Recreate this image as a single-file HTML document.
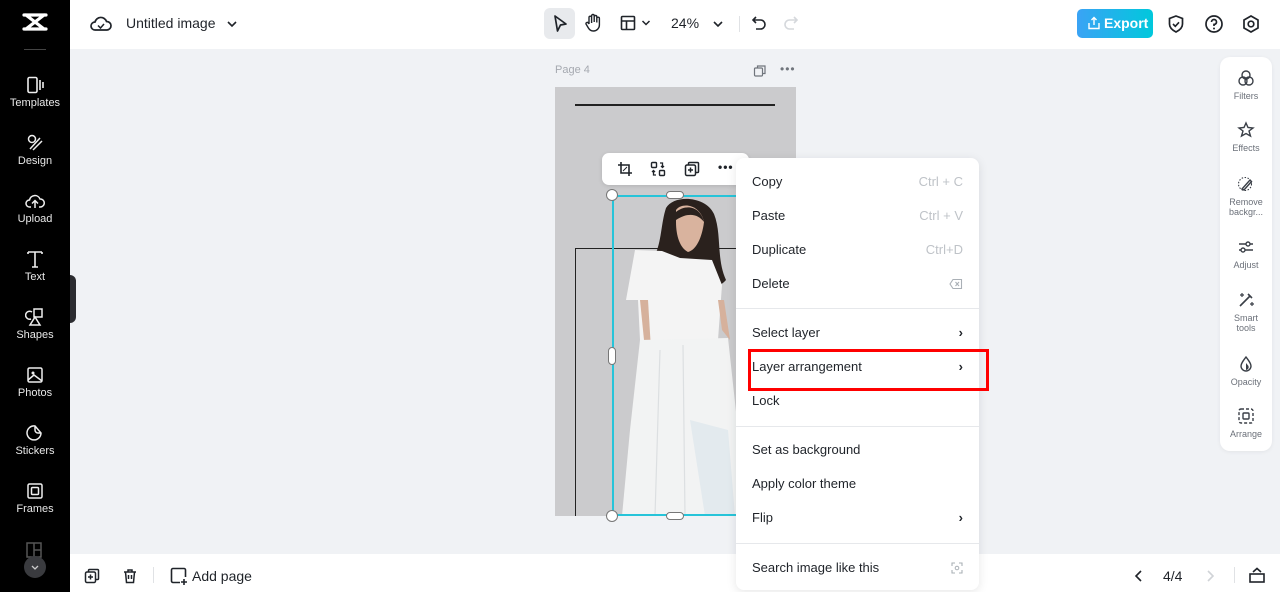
<!DOCTYPE html>
<html><head><meta charset="utf-8">
<style>
*{box-sizing:border-box;margin:0;padding:0}
body{width:1280px;height:592px;overflow:hidden;position:relative;background:#f0f2f5;font-family:"Liberation Sans",sans-serif;color:#1f2329}
.abs{position:absolute}
#side{left:0;top:0;width:70px;height:592px;background:#000}
.si{position:absolute;left:0;width:70px;text-align:center;color:#e8e8e8;font-size:11px}
.si svg{display:block;margin:0 auto 3px}
#top{left:70px;top:0;width:1210px;height:49px;background:#fff}
#bot{left:70px;top:554px;width:1210px;height:38px;background:#fff}
.mi{position:absolute;left:16px;right:16px;font-size:13px;color:#1f2329;height:20px;line-height:20px}
.mi .k{position:absolute;right:0;top:0;color:#bfc3c8;font-size:13px}
.sep{position:absolute;left:0;right:0;height:1px;background:#e6e8eb}
.ri{position:absolute;left:0;width:52px;text-align:center;font-size:9px;color:#6b7079;line-height:10px}
.ri svg{display:block;margin:0 auto 4px}
</style></head><body>

<div id="side" class="abs">
  <svg class="abs" style="left:22px;top:12px" width="26" height="20" viewBox="0 0 26 20"><path d="M2 3 L24 3 M2 17 L24 17 M4 3 L22 17 M22 3 L4 17" stroke="#fff" stroke-width="3.2" fill="none" stroke-linecap="round"/></svg>
  <div class="abs" style="left:24px;top:49px;width:22px;height:1px;background:#444"></div>
  <div class="si" style="top:76px"><svg width="20" height="18" viewBox="0 0 20 18"><rect x="3" y="1.5" width="9" height="15" rx="1.5" stroke="#eee" stroke-width="1.6" fill="none"/><path d="M15 4v10M18 6v6" stroke="#eee" stroke-width="1.6"/></svg>Templates</div>
  <div class="si" style="top:134px"><svg width="20" height="18" viewBox="0 0 20 18"><circle cx="7" cy="5" r="3.5" stroke="#eee" stroke-width="1.5" fill="none"/><path d="M5 15 L15 4 M8 16 L17 7" stroke="#eee" stroke-width="1.5"/></svg>Design</div>
  <div class="si" style="top:192px"><svg width="20" height="18" viewBox="0 0 20 18"><path d="M6 15 H4.5 A3.5 3.5 0 0 1 4.5 8 A5.5 5.5 0 0 1 15 7 A3.5 3.5 0 0 1 15.5 15 H14 M10 16 V9 M7 11.5 L10 8.5 L13 11.5" stroke="#eee" stroke-width="1.5" fill="none"/></svg>Upload</div>
  <div class="si" style="top:250px"><svg width="20" height="18" viewBox="0 0 20 18"><path d="M3 2 H17 M10 2 V17 M3 2 V4 M17 2 V4 M7 17 H13" stroke="#eee" stroke-width="1.6" fill="none"/></svg>Text</div>
  <div class="si" style="top:308px"><svg width="20" height="18" viewBox="0 0 20 18"><path d="M7 4 A4 4 0 1 0 6 11" stroke="#eee" stroke-width="1.5" fill="none"/><rect x="9" y="1" width="8" height="8" stroke="#eee" stroke-width="1.5" fill="none"/><path d="M10 9 L15 17 H5 Z" stroke="#eee" stroke-width="1.5" fill="none"/></svg>Shapes</div>
  <div class="si" style="top:366px"><svg width="20" height="18" viewBox="0 0 20 18"><rect x="3" y="2" width="14" height="14" rx="1.5" stroke="#eee" stroke-width="1.5" fill="none"/><circle cx="8" cy="7" r="1.5" fill="#eee"/><path d="M3 14 L9 9 L17 15" stroke="#eee" stroke-width="1.5" fill="none"/></svg>Photos</div>
  <div class="si" style="top:424px"><svg width="20" height="18" viewBox="0 0 20 18"><path d="M16 9 A7 7 0 1 1 10 2 L16 9 Z M10 2 V6 A3 3 0 0 0 13 9 H16" stroke="#eee" stroke-width="1.5" fill="none"/></svg>Stickers</div>
  <div class="si" style="top:482px"><svg width="20" height="18" viewBox="0 0 20 18"><rect x="3" y="2" width="14" height="14" rx="1.5" stroke="#eee" stroke-width="1.5" fill="none"/><rect x="6.5" y="5.5" width="7" height="7" rx="1" stroke="#eee" stroke-width="1.5" fill="none"/></svg>Frames</div>
  <svg class="abs" style="left:26px;top:542px" width="16" height="16" viewBox="0 0 16 16"><rect x="1" y="1" width="14" height="14" stroke="#555" stroke-width="1.5" fill="none"/><path d="M8 1V15M8 8H15" stroke="#555" stroke-width="1.5"/></svg>
  <div class="abs" style="left:24px;top:556px;width:22px;height:22px;border-radius:50%;background:#3a3b3f"></div>
  <svg class="abs" style="left:30px;top:562px" width="10" height="10" viewBox="0 0 10 10"><path d="M2 4 L5 7 L8 4" stroke="#ccc" stroke-width="1.3" fill="none"/></svg>
</div>
<div class="abs" style="left:70px;top:275px;width:6px;height:48px;background:#2b2c30;border-radius:0 6px 6px 0"></div>

<div id="top" class="abs">
  <svg class="abs" style="left:20px;top:14px" width="22" height="20" viewBox="0 0 22 20"><path d="M6 16 H5 A4 4 0 0 1 5 8 A6 6 0 0 1 16.5 7.5 A4.2 4.2 0 0 1 17 16 Z" stroke="#1f2329" stroke-width="1.7" fill="none"/><path d="M8 11.5 L10.5 14 L14 10" stroke="#1f2329" stroke-width="1.5" fill="none"/></svg>
  <div class="abs" style="left:56px;top:15px;font-size:14px;color:#1f2329">Untitled image</div>
  <svg class="abs" style="left:156px;top:18px" width="12" height="12" viewBox="0 0 12 12"><path d="M2 4 L6 8 L10 4" stroke="#1f2329" stroke-width="1.6" fill="none"/></svg>

  <div class="abs" style="left:474px;top:8px;width:31px;height:31px;background:#e8eaed;border-radius:6px"></div>
  <svg class="abs" style="left:481px;top:14px" width="18" height="20" viewBox="0 0 18 20"><path d="M4 2 L15 10 L9.5 11 L6.5 17 Z" stroke="#1f2329" stroke-width="1.7" fill="none" stroke-linejoin="round"/></svg>
  <svg class="abs" style="left:514px;top:13px" width="18" height="20" viewBox="0 0 18 20"><path d="M5 11 V4.5 a1.3 1.3 0 0 1 2.6 0 V10 M7.6 9 V2.8 a1.3 1.3 0 0 1 2.6 0 V9 M10.2 9 V3.8 a1.3 1.3 0 0 1 2.6 0 V9.5 M12.8 9.5 V5.5 a1.3 1.3 0 0 1 2.6 0 V12 a6 6 0 0 1 -6 6 a6 6 0 0 1 -5 -3 L2 11 a1.3 1.3 0 0 1 2.2 -1.2 L5 11" stroke="#1f2329" stroke-width="1.4" fill="none"/></svg>
  <svg class="abs" style="left:550px;top:15px" width="16" height="16" viewBox="0 0 16 16"><rect x="1.5" y="1.5" width="13" height="13" rx="1" stroke="#1f2329" stroke-width="1.6" fill="none"/><path d="M1.5 6 H14.5 M6.5 6 V14.5" stroke="#1f2329" stroke-width="1.6"/></svg>
  <svg class="abs" style="left:571px;top:18px" width="10" height="10" viewBox="0 0 10 10"><path d="M1.5 3 L5 6.5 L8.5 3" stroke="#1f2329" stroke-width="1.5" fill="none"/></svg>
  <div class="abs" style="left:601px;top:15px;font-size:14px;color:#1f2329">24%</div>
  <svg class="abs" style="left:642px;top:18px" width="12" height="12" viewBox="0 0 12 12"><path d="M2 4 L6 8 L10 4" stroke="#1f2329" stroke-width="1.6" fill="none"/></svg>
  <div class="abs" style="left:669px;top:16px;width:1px;height:16px;background:#e0e2e5"></div>
  <svg class="abs" style="left:681px;top:15px" width="16" height="16" viewBox="0 0 16 16"><path d="M5 2 L2 5 L5 8 M2 5 H9.5 A4.5 4.5 0 0 1 9.5 14 H5" stroke="#1f2329" stroke-width="1.6" fill="none"/></svg>
  <svg class="abs" style="left:713px;top:15px" width="16" height="16" viewBox="0 0 16 16"><path d="M11 2 L14 5 L11 8 M14 5 H6.5 A4.5 4.5 0 0 0 6.5 14 H11" stroke="#d5d8dc" stroke-width="1.6" fill="none"/></svg>

  <div class="abs" style="left:1007px;top:9px;width:76px;height:29px;border-radius:5px;background:linear-gradient(90deg,#3aa3f5,#00c8dc)"></div>
  <svg class="abs" style="left:1017px;top:16px" width="14" height="14" viewBox="0 0 14 14"><path d="M7 9 V1.5 M4.5 4 L7 1.5 L9.5 4 M2 7 V12.5 H12 V7" stroke="#fff" stroke-width="1.4" fill="none"/></svg>
  <div class="abs" style="left:1034px;top:15px;font-size:14px;font-weight:bold;color:#fff">Export</div>
  <svg class="abs" style="left:1096px;top:14px" width="20" height="20" viewBox="0 0 20 20"><path d="M10 2 L16.5 4.5 V10 C16.5 14 13 16.5 10 18 C7 16.5 3.5 14 3.5 10 V4.5 Z" stroke="#1f2329" stroke-width="1.7" fill="none"/><path d="M7 10 L9.3 12.3 L13 8.3" stroke="#1f2329" stroke-width="1.6" fill="none"/></svg>
  <svg class="abs" style="left:1134px;top:14px" width="20" height="20" viewBox="0 0 20 20"><circle cx="10" cy="10" r="8" stroke="#1f2329" stroke-width="1.7" fill="none"/><path d="M7.5 8 A2.5 2.5 0 1 1 10 10.5 V12" stroke="#1f2329" stroke-width="1.7" fill="none"/><circle cx="10" cy="14.5" r="1" fill="#1f2329"/></svg>
  <svg class="abs" style="left:1171px;top:14px" width="20" height="20" viewBox="0 0 20 20"><path d="M10 2 L17 6 V14 L10 18 L3 14 V6 Z" stroke="#1f2329" stroke-width="1.7" fill="none"/><circle cx="10" cy="10" r="2.8" stroke="#1f2329" stroke-width="1.7" fill="none"/></svg>
</div>

<!-- right panel -->
<div class="abs" style="left:1220px;top:57px;width:52px;height:394px;background:#fff;border-radius:10px;box-shadow:0 1px 4px rgba(0,0,0,.06)">
  <div class="ri" style="top:12px"><svg width="18" height="18" viewBox="0 0 18 18"><circle cx="9" cy="6" r="4" stroke="#3a3f47" stroke-width="1.4" fill="none"/><circle cx="6" cy="12" r="4" stroke="#3a3f47" stroke-width="1.4" fill="none"/><circle cx="12" cy="12" r="4" stroke="#3a3f47" stroke-width="1.4" fill="none"/></svg>Filters</div>
  <div class="ri" style="top:64px"><svg width="18" height="18" viewBox="0 0 18 18"><path d="M9 2 L11 6.5 L16 7 L12 10 L13.5 15 L9 12.5 L4.5 15 L6 10 L2 7 L7 6.5 Z" stroke="#3a3f47" stroke-width="1.4" fill="none"/></svg>Effects</div>
  <div class="ri" style="top:118px"><svg width="18" height="18" viewBox="0 0 18 18"><circle cx="8" cy="9" r="6.5" stroke="#3a3f47" stroke-width="1.1" stroke-dasharray="1.5 1.5" fill="none"/><path d="M5 14 L13 5 L14.5 6.5 L7 15 Z" stroke="#3a3f47" stroke-width="1.4" fill="none"/></svg>Remove<br>backgr...</div>
  <div class="ri" style="top:181px"><svg width="18" height="18" viewBox="0 0 18 18"><path d="M2 6 H16 M2 12 H16" stroke="#3a3f47" stroke-width="1.4"/><circle cx="11" cy="6" r="2" fill="#fff" stroke="#3a3f47" stroke-width="1.4"/><circle cx="6" cy="12" r="2" fill="#fff" stroke="#3a3f47" stroke-width="1.4"/></svg>Adjust</div>
  <div class="ri" style="top:234px"><svg width="18" height="18" viewBox="0 0 18 18"><path d="M3 15 L13 5 M11 3 L15 7" stroke="#3a3f47" stroke-width="1.6"/><path d="M5 2 V6 M3 4 H7 M15 11 V15 M13 13 H17" stroke="#3a3f47" stroke-width="1.2"/></svg>Smart<br>tools</div>
  <div class="ri" style="top:298px"><svg width="18" height="18" viewBox="0 0 18 18"><path d="M9 2 C12 6 14 8.5 14 11 A5 5 0 0 1 4 11 C4 8.5 6 6 9 2 Z" stroke="#3a3f47" stroke-width="1.4" fill="none"/><path d="M9 8 V15 A3 3 0 0 0 11.5 11 Z" fill="#3a3f47"/></svg>Opacity</div>
  <div class="ri" style="top:350px"><svg width="18" height="18" viewBox="0 0 18 18"><rect x="2" y="2" width="14" height="14" rx="2" stroke="#3a3f47" stroke-width="1.4" stroke-dasharray="3 2" fill="none"/><rect x="6" y="6" width="6" height="6" rx="1" stroke="#3a3f47" stroke-width="1.4" fill="none"/></svg>Arrange</div>
</div>

<!-- page header -->
<div class="abs" style="left:555px;top:64px;font-size:11px;color:#a5a9b0">Page 4</div>
<svg class="abs" style="left:753px;top:64px" width="14" height="14" viewBox="0 0 14 14"><rect x="1.5" y="4" width="8" height="8" rx="1" stroke="#70757c" stroke-width="1.2" fill="none"/><path d="M4.5 4 V2 H12 V9.5 H9.5" stroke="#70757c" stroke-width="1.2" fill="none"/></svg>
<div class="abs" style="left:780px;top:62px;font-size:12px;color:#70757c;letter-spacing:1px">•••</div>

<!-- canvas -->
<div class="abs" style="left:555px;top:87px;width:241px;height:429px;background:#cbcbcd;overflow:hidden">
  <div class="abs" style="left:20px;top:17px;width:200px;height:1.5px;background:#222"></div>
  <div class="abs" style="left:20px;top:161px;width:200px;height:300px;border:1.5px solid #222"></div>
  <svg class="abs" style="left:0;top:0" width="241" height="429" viewBox="555 87 241 429">
    <path d="M666 208 C674 194 706 196 714 214 C722 234 716 258 726 280 C716 292 700 286 694 272 L682 262 C670 272 654 272 650 262 C662 250 660 226 666 208 Z" fill="#2a211d"/>
    <path d="M676 210 C682 202 700 204 704 222 C702 238 696 250 688 252 C680 248 676 236 676 222 Z" fill="#d9b39e"/>
    <path d="M676 212 C686 204 700 206 704 222 C698 214 688 212 676 220 Z" fill="#2a211d"/>
    <path d="M635 250 L662 251 L680 258 L712 260 L722 285 L718 340 L640 340 L638 300 L626 300 Z" fill="#f4f4f4"/>
    <path d="M640 300 L646 360 L652 366 L648 300 Z" fill="#d6b19c"/>
    <path d="M718 300 L722 330 L730 340 L724 300 Z" fill="#d6b19c"/>
    <path d="M640 340 L728 338 L738 430 L738 516 L622 516 L630 430 Z" fill="#f2f3f3"/>
    <path d="M683 345 L685 516 M660 350 L655 516" stroke="#dcdfe1" stroke-width="1.2" fill="none"/>
    <path d="M690 420 L705 516 L735 516 L728 430 Z" fill="#e3eaee"/>
  </svg>
  <div class="abs" style="left:57px;top:108px;width:200px;height:321px;border:2px solid #27c4d9;border-right:none"></div>
</div>
<div class="abs" style="left:606px;top:189px;width:12px;height:12px;border-radius:50%;background:#fff;border:1px solid #777"></div>
<div class="abs" style="left:666px;top:191px;width:18px;height:8px;border-radius:4px;background:#fff;border:1px solid #777"></div>
<div class="abs" style="left:608px;top:347px;width:8px;height:18px;border-radius:4px;background:#fff;border:1px solid #777"></div>
<div class="abs" style="left:606px;top:510px;width:12px;height:12px;border-radius:50%;background:#fff;border:1px solid #777"></div>
<div class="abs" style="left:666px;top:512px;width:18px;height:8px;border-radius:4px;background:#fff;border:1px solid #777"></div>

<!-- float toolbar -->
<div class="abs" style="left:602px;top:153px;width:147px;height:32px;background:#fff;border-radius:7px;box-shadow:0 1px 4px rgba(0,0,0,.12)"></div>
<svg class="abs" style="left:617px;top:161px" width="16" height="16" viewBox="0 0 16 16"><path d="M4 1 V12 H15 M1 4 H12 V15" stroke="#1f2329" stroke-width="1.6" fill="none"/><path d="M6 10 L10 6" stroke="#1f2329" stroke-width="1"/></svg>
<svg class="abs" style="left:650px;top:161px" width="16" height="16" viewBox="0 0 16 16"><rect x="1.5" y="1.5" width="5" height="5" rx="1" stroke="#1f2329" stroke-width="1.4" fill="none"/><rect x="9.5" y="9.5" width="5" height="5" rx="1" stroke="#1f2329" stroke-width="1.4" fill="none"/><path d="M10 2 H12.5 V6 M11 5 L12.5 6.5 L14 5 M6 14 H3.5 V10 M2 11 L3.5 9.5 L5 11" stroke="#1f2329" stroke-width="1.3" fill="none"/></svg>
<svg class="abs" style="left:684px;top:161px" width="16" height="16" viewBox="0 0 16 16"><rect x="1.5" y="4" width="10" height="10.5" rx="1.5" stroke="#1f2329" stroke-width="1.5" fill="none"/><path d="M4.5 4 V2.5 A1 1 0 0 1 5.5 1.5 H13.5 A1 1 0 0 1 14.5 2.5 V10.5 A1 1 0 0 1 13.5 11.5 H11.5 M6.5 6.5 V11.5 M4 9 H9" stroke="#1f2329" stroke-width="1.5" fill="none"/></svg>
<div class="abs" style="left:718px;top:160px;font-size:12px;color:#1f2329;letter-spacing:1px;font-weight:bold">•••</div>

<!-- bottom bar -->
<div id="bot" class="abs">
  <svg class="abs" style="left:14px;top:14px" width="16" height="16" viewBox="0 0 16 16"><rect x="1.5" y="4" width="10" height="10.5" rx="1.5" stroke="#1f2329" stroke-width="1.5" fill="none"/><path d="M4.5 4 V2.5 A1 1 0 0 1 5.5 1.5 H13.5 A1 1 0 0 1 14.5 2.5 V10.5 A1 1 0 0 1 13.5 11.5 H11.5 M6.5 6.5 V11.5 M4 9 H9" stroke="#1f2329" stroke-width="1.5" fill="none"/></svg>
  <svg class="abs" style="left:52px;top:14px" width="16" height="16" viewBox="0 0 16 16"><path d="M2 4 H14 M6 4 V2 H10 V4 M3.5 4 L4.5 14.5 H11.5 L12.5 4 M6.5 7 V11 M9.5 7 V11" stroke="#1f2329" stroke-width="1.5" fill="none"/></svg>
  <div class="abs" style="left:83px;top:13px;width:1px;height:16px;background:#e0e2e5"></div>
  <svg class="abs" style="left:100px;top:13px" width="18" height="18" viewBox="0 0 18 18"><path d="M10 15.5 H3 A1.5 1.5 0 0 1 1.5 14 V3 A1.5 1.5 0 0 1 3 1.5 H14 A1.5 1.5 0 0 1 15.5 3 V10" stroke="#1f2329" stroke-width="1.6" fill="none"/><path d="M14 12 V18 M11 15 H17" stroke="#1f2329" stroke-width="1.6"/></svg>
  <div class="abs" style="left:122px;top:14px;font-size:14px;color:#1f2329">Add page</div>
  <svg class="abs" style="left:1063px;top:15px" width="12" height="14" viewBox="0 0 12 14"><path d="M8 2 L3 7 L8 12" stroke="#1f2329" stroke-width="1.6" fill="none"/></svg>
  <div class="abs" style="left:1093px;top:14px;font-size:14px;color:#1f2329">4/4</div>
  <svg class="abs" style="left:1134px;top:15px" width="12" height="14" viewBox="0 0 12 14"><path d="M4 2 L9 7 L4 12" stroke="#d0d3d7" stroke-width="1.6" fill="none"/></svg>
  <div class="abs" style="left:1164px;top:13px;width:1px;height:16px;background:#e0e2e5"></div>
  <svg class="abs" style="left:1178px;top:12px" width="18" height="18" viewBox="0 0 18 18"><rect x="2" y="8" width="14" height="8" stroke="#1f2329" stroke-width="1.6" fill="none"/><path d="M5 6 L9 2.5 L13 6" stroke="#1f2329" stroke-width="1.6" fill="none"/></svg>
</div>

<!-- context menu (above bottom bar) -->
<div class="abs" style="left:736px;top:158px;width:243px;height:432px;background:#fff;border-radius:8px;box-shadow:0 2px 10px rgba(0,0,0,.10);z-index:5">
  <div class="mi" style="top:14px">Copy<span class="k">Ctrl + C</span></div>
  <div class="mi" style="top:48px">Paste<span class="k">Ctrl + V</span></div>
  <div class="mi" style="top:82px">Duplicate<span class="k">Ctrl+D</span></div>
  <div class="mi" style="top:116px">Delete<span class="k"><svg width="14" height="12" viewBox="0 0 14 12" style="margin-top:4px"><path d="M4 1.5 H12.5 V10.5 H4 L1 6 Z M6.5 4 L10 8 M10 4 L6.5 8" stroke="#aab0b6" stroke-width="1.1" fill="none"/></svg></span></div>
  <div class="sep" style="top:150px"></div>
  <div class="mi" style="top:165px">Select layer<span class="k" style="color:#1f2329;font-weight:bold">›</span></div>
  <div class="mi" style="top:199px">Layer arrangement<span class="k" style="color:#1f2329;font-weight:bold">›</span></div>
  <div class="mi" style="top:233px">Lock</div>
  <div class="sep" style="top:268px"></div>
  <div class="mi" style="top:282px">Set as background</div>
  <div class="mi" style="top:316px">Apply color theme</div>
  <div class="mi" style="top:350px">Flip<span class="k" style="color:#1f2329;font-weight:bold">›</span></div>
  <div class="sep" style="top:385px"></div>
  <div class="mi" style="top:400px">Search image like this<span class="k"><svg width="12" height="12" viewBox="0 0 12 12" style="margin-top:4px"><path d="M1 4 V1 H4 M8 1 H11 V4 M11 8 V11 H8 M4 11 H1 V8" stroke="#aab0b6" stroke-width="1.1" fill="none"/><circle cx="6" cy="6" r="1.8" stroke="#aab0b6" stroke-width="1" fill="none"/></svg></span></div>
</div>
<div class="abs" style="left:748px;top:349px;width:241px;height:42px;border:3px solid #f00;z-index:6"></div>
</body></html>
